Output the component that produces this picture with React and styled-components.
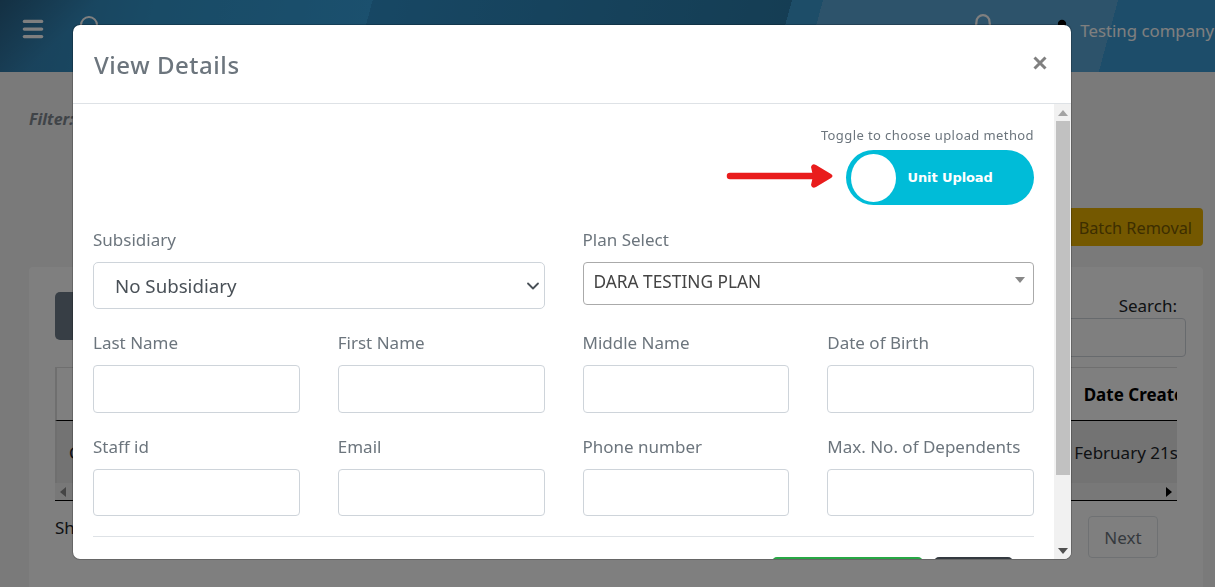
import React from "react";
import styled, { createGlobalStyle } from "styled-components";
import { Menu, Search as SearchIcon, Bell, User, ChevronDown } from "lucide-react";

const Global = createGlobalStyle`
  html, body { margin: 0; padding: 0; height: 100%; overflow: hidden; }
  body { background: #f4f4f4; font-family: "Noto Sans", "Open Sans", sans-serif; color: #212529; }
  * { box-sizing: border-box; }
`;

const Page = styled.div`
  height: 587px;
  overflow: hidden;
  display: flex;
  flex-direction: column;
`;
const Header = styled.header`
  height: 72px;
  flex: none;
  display: flex;
  align-items: flex-start;
  padding-left: 20px;
  color: #fff;
  background:
    linear-gradient(135deg, rgba(0,0,0,.24) 0, transparent 70px),
    linear-gradient(105deg,
      #347fb0 0, #3296cc 150px, #36a0dc 360px,
      #2f8fc8 360px, #2a7ba8 765px,
      #3a9ad0 765px, #3a9ad0 795px,
      #5aa6d6 795px, #5aa6d6 1080px,
      #3a9ad4 1080px, #3a9ad4 100%);
`;
const MenuSlot = styled.span`
  display: flex;
  margin-top: 16px;
`;
const HeaderRight = styled.div`
  margin-left: auto;
  display: flex;
  align-items: flex-start;
  white-space: nowrap;
  font-size: 16.8px;
`;
const BellSlot = styled.span`
  display: flex;
  margin: 13px 56px 0 0;
  color: #fff;
`;
const UserSlot = styled.span`
  display: flex;
  margin: 18px 8px 0 0;
  color: #000;
`;
const CompanyName = styled.span`
  line-height: 24px;
  margin: 19px 1px 0 0;
`;
const SearchSlot = styled.span`
  display: flex;
  margin: 14px 0 0 32px;
  color: #fff;
`;
const Main = styled.main`
  flex: 1;
  padding: 37px 12px 0 29px;
`;
const FilterLabel = styled.div`
  font-weight: 700;
  font-style: italic;
  font-size: 16px;
  line-height: 20px;
  color: #808890;
`;
const Actions = styled.div`
  display: flex;
  justify-content: flex-end;
  margin-top: 79px;
`;
const WarnButton = styled.button`
  height: 38px;
  padding: 2px 11px 0;
  border: 0;
  border-radius: 4px;
  background: #e8b000;
  color: #7a5c00;
  font: 16.3px "Noto Sans", sans-serif;
`;
const Card = styled.section`
  margin-top: 21px;
  height: 340px;
  background: #fff;
  border-radius: 4px;
  padding: 25px 26px;
`;
const CardTop = styled.div`
  display: flex;
  justify-content: space-between;
  height: 75px;
`;
const DarkButton = styled.div`
  width: 120px;
  height: 48px;
  background: #6f7d8a;
  border-radius: 5px;
`;
const SearchBox = styled.label`
  display: flex;
  flex-direction: column;
  align-items: flex-end;
  width: 200px;
  margin-right: -9px;
  font-size: 17px;
`;
const SearchText = styled.span`
  margin-right: 9px;
  line-height: 28px;
  margin-bottom: -2px;
`;
const SearchInput = styled.input`
  width: 100%;
  height: 39px;
  border: 1px solid #ced4da;
  border-radius: 4px;
  background: transparent;
`;
const TableWrap = styled.div`
  overflow: hidden;
  border-bottom: 1px solid #000;
`;
const TableRow = styled.div`
  display: flex;
  justify-content: space-between;
  align-items: center;
  height: ${p => p.$h}px;
  background: ${p => p.$bg};
  border-top: ${p => (p.$line ? "1px solid #dedede" : "0")};
  border-bottom: ${p => (p.$line ? "1px solid #000" : "0")};
  border-left: 2px solid #dedede;
  padding-left: ${p => p.$pad}px;
  font-size: 17px;
  white-space: nowrap;
  overflow: hidden;
`;
const HeadCell = styled.span`
  font-weight: 700;
  flex: none;
  margin-right: -18px;
  color: #000;
`;
const Cell = styled.span`
  flex: none;
  margin-right: -7px;
`;
const TableScroll = styled.div`
  height: 17px;
  background: #f1f1f1;
  display: flex;
  justify-content: space-between;
  align-items: center;
  padding: 0 3px;
`;
const Foot = styled.div`
  display: flex;
  justify-content: space-between;
  align-items: flex-start;
  margin-top: 15px;
  font-size: 17px;
  padding-right: 19px;
`;
const FootText = styled.span`
  line-height: 24px;
`;
const NextButton = styled.div`
  width: 70px;
  height: 42px;
  border: 1px solid #dee2e6;
  border-radius: 4px;
  display: flex;
  align-items: center;
  justify-content: center;
  color: #6c757d;
`;

const Overlay = styled.div`
  position: fixed;
  inset: 0;
  background: rgba(0,0,0,.5);
`;
const Modal = styled.div`
  position: absolute;
  left: 72px;
  top: 24px;
  width: 1000px;
  height: 536px;
  background: #fff;
  border-radius: 8px;
  border: 1px solid rgba(0,0,0,.2);
  background-clip: padding-box;
  display: flex;
  flex-direction: column;
  overflow: hidden;
`;
const ModalHeader = styled.div`
  height: 79px;
  flex: none;
  display: flex;
  align-items: center;
  justify-content: space-between;
  padding: 0 24px 0 21px;
  border-bottom: 1px solid #dee2e6;
`;
const ModalTitle = styled.h5`
  margin: 0;
  font-size: 24px;
  font-weight: 500;
  color: #6c757d;
  letter-spacing: .55px;
`;
const CloseIcon = styled.svg`
  width: 14px;
  height: 14px;
  display: block;
  margin-top: -3px;
`;
const ModalBody = styled.div`
  flex: 1;
  min-height: 0;
  display: flex;
  overflow: hidden;
`;
const Content = styled.div`
  flex: 1;
  min-width: 0;
  padding: 22px 20px 0;
`;
const Scrollbar = styled.div`
  width: 17px;
  flex: none;
  background: #f1f1f1;
  display: flex;
  flex-direction: column;
  align-items: center;
`;
const ScrollArrow = styled.div`
  height: 17px;
  flex: none;
  display: flex;
  align-items: center;
  justify-content: center;
`;
const Thumb = styled.div`
  width: 14px;
  height: 354px;
  background: #c1c1c1;
  flex: none;
`;
const ScrollSpacer = styled.div`
  flex: 1;
`;
const ToggleBlock = styled.div`
  display: flex;
  flex-direction: column;
  align-items: flex-end;
`;
const ToggleHint = styled.div`
  font-size: 13px;
  line-height: 18px;
  color: #6c757d;
  letter-spacing: .4px;
`;
const ToggleLine = styled.div`
  display: flex;
  align-items: center;
  margin-top: 6px;
`;
const Arrow = styled.svg`
  width: 108px;
  height: 26px;
  margin: 0 12px 3px 0;
  display: block;
`;
const Toggle = styled.div`
  width: 188px;
  height: 55px;
  border-radius: 28px;
  background: #00bcd8;
  display: flex;
  align-items: center;
  padding-left: 5px;
`;
const Knob = styled.div`
  width: 45px;
  height: 48px;
  border-radius: 50%;
  background: #fff;
  flex: none;
`;
const ToggleText = styled.span`
  margin-left: 11.5px;
  color: #fff;
  font: 700 13px "DejaVu Sans", sans-serif;
  letter-spacing: -.1px;
`;
const FormGrid = styled.div`
  display: grid;
  grid-template-columns: repeat(4, 1fr);
  column-gap: 38px;
  row-gap: 22px;
  margin-top: 23px;
`;
const Field = styled.div`
  grid-column: span ${p => p.$span || 1};
  display: flex;
  flex-direction: column;
  position: relative;
`;
const FieldLabel = styled.label`
  font-size: 17px;
  line-height: 24px;
  color: #6c757d;
  margin-bottom: 10px;
`;
const TextInput = styled.input`
  height: ${p => p.$h}px;
  width: 100%;
  border: 1px solid #ced4da;
  border-radius: 4px;
  background: #fff;
  outline: 0;
`;
const NativeSelect = styled.select`
  appearance: none;
  width: 100%;
  height: 47px;
  border: 1px solid #ced4da;
  border-radius: 5px;
  background: #fff;
  padding: 0 0 0 21px;
  font: 18.7px "Noto Sans", sans-serif;
  color: #495057;
  outline: 0;
`;
const SelectChevron = styled.span`
  position: absolute;
  right: 2px;
  bottom: 13px;
  display: flex;
  color: #495057;
  pointer-events: none;
`;
const Select2 = styled.div`
  height: 43px;
  border: 1px solid #aaa;
  border-radius: 4px;
  display: flex;
  align-items: center;
  padding: 0 10px 5px;
  font-size: 17.3px;
  color: #444;
  position: relative;
`;
const Caret = styled.span`
  position: absolute;
  right: 8px;
  top: 14px;
  border-style: solid;
  border-width: 6px 5px 0;
  border-color: #888 transparent transparent;
`;
const Rule = styled.hr`
  margin: 20px 0 0;
  border: 0;
  border-top: 1px solid #dee2e6;
`;
const Footer = styled.div`
  display: flex;
  justify-content: flex-end;
  gap: 11px;
  margin-top: 20px;
  padding-right: 21px;
`;
const FootButton = styled.div`
  width: ${p => p.$w}px;
  height: 40px;
  border-radius: 5px;
  background: ${p => p.$bg};
`;

const Tri = ({ dir, fill }) => {
  const pts = { up: "0,6 5,0 10,6", down: "0,0 10,0 5,6", left: "6,0 6,10 0,5", right: "0,0 6,5 0,10" }[dir];
  return (
    <svg width="10" height="10" viewBox="0 0 10 10"><polygon points={pts} fill={fill} transform={dir === "up" || dir === "down" ? "translate(0 2)" : "translate(2 0)"} /></svg>
  );
};

const row2 = ["Last Name", "First Name", "Middle Name", "Date of Birth"];
const row3 = ["Staff id", "Email", "Phone number", "Max. No. of Dependents"];

export default function App() {
  return (
    <>
      <Global />
      <Page>
        <Header>
          <MenuSlot><Menu size={26} strokeWidth={3} /></MenuSlot>
          <SearchSlot><SearchIcon size={24} /></SearchSlot>
          <HeaderRight>
            <BellSlot><Bell size={26} /></BellSlot>
            <UserSlot><User size={20} fill="#000" /></UserSlot>
            <CompanyName>Testing company</CompanyName>
          </HeaderRight>
        </Header>
        <Main>
          <FilterLabel>Filter:</FilterLabel>
          <Actions><WarnButton>Batch Removal</WarnButton></Actions>
          <Card>
            <CardTop>
              <DarkButton />
              <SearchBox>
                <SearchText>Search:</SearchText>
                <SearchInput />
              </SearchBox>
            </CardTop>
            <TableWrap>
              <TableRow $h={54} $bg="#fff" $pad={40} $line>
                <HeadCell>Company</HeadCell>
                <HeadCell>Date Created</HeadCell>
              </TableRow>
              <TableRow $h={62} $bg="#e6e6e6" $pad={12}>
                <Cell>Company</Cell>
                <Cell>February 21st</Cell>
              </TableRow>
              <TableScroll>
                <Tri dir="left" fill="#8a8a8a" />
                <Tri dir="right" fill="#000" />
              </TableScroll>
            </TableWrap>
            <Foot>
              <FootText>Showing 1 to 1 of 1 entries</FootText>
              <NextButton>Next</NextButton>
            </Foot>
          </Card>
        </Main>
      </Page>
      <Overlay>
        <Modal>
          <ModalHeader>
            <ModalTitle>View Details</ModalTitle>
            <CloseIcon viewBox="0 0 14 14"><path d="M1.5 1.5 L12.5 12.5 M12.5 1.5 L1.5 12.5" stroke="#808080" strokeWidth="3" /></CloseIcon>
          </ModalHeader>
          <ModalBody>
            <Content>
              <ToggleBlock>
                <ToggleHint>Toggle to choose upload method</ToggleHint>
                <ToggleLine>
                  <Arrow viewBox="0 0 108 26">
                    <path d="M4 13 H88" stroke="#e91c1c" strokeWidth="6.5" strokeLinecap="round" />
                    <path d="M85 4 Q86 0 90 2 L105 11 Q108 13 105 15 L90 24 Q86 26 85 22 L87 13 Z" fill="#e91c1c" />
                  </Arrow>
                  <Toggle>
                    <Knob />
                    <ToggleText>Unit Upload</ToggleText>
                  </Toggle>
                </ToggleLine>
              </ToggleBlock>
              <FormGrid>
                <Field $span={2}>
                  <FieldLabel>Subsidiary</FieldLabel>
                  <NativeSelect defaultValue="none"><option value="none">No Subsidiary</option></NativeSelect>
                  <SelectChevron><ChevronDown size={20} strokeWidth={2.2} /></SelectChevron>
                </Field>
                <Field $span={2}>
                  <FieldLabel>Plan Select</FieldLabel>
                  <Select2>DARA TESTING PLAN<Caret /></Select2>
                </Field>
                {row2.map(l => (
                  <Field key={l}><FieldLabel>{l}</FieldLabel><TextInput $h={48} /></Field>
                ))}
                {row3.map(l => (
                  <Field key={l}><FieldLabel>{l}</FieldLabel><TextInput $h={47} /></Field>
                ))}
              </FormGrid>
              <Rule />
              <Footer>
                <FootButton $w={151} $bg="#28a745" />
                <FootButton $w={79} $bg="#343a40" />
              </Footer>
            </Content>
            <Scrollbar>
              <ScrollArrow><Tri dir="up" fill="#a3a3a3" /></ScrollArrow>
              <Thumb />
              <ScrollSpacer />
              <ScrollArrow><Tri dir="down" fill="#505050" /></ScrollArrow>
            </Scrollbar>
          </ModalBody>
        </Modal>
      </Overlay>
    </>
  );
}
